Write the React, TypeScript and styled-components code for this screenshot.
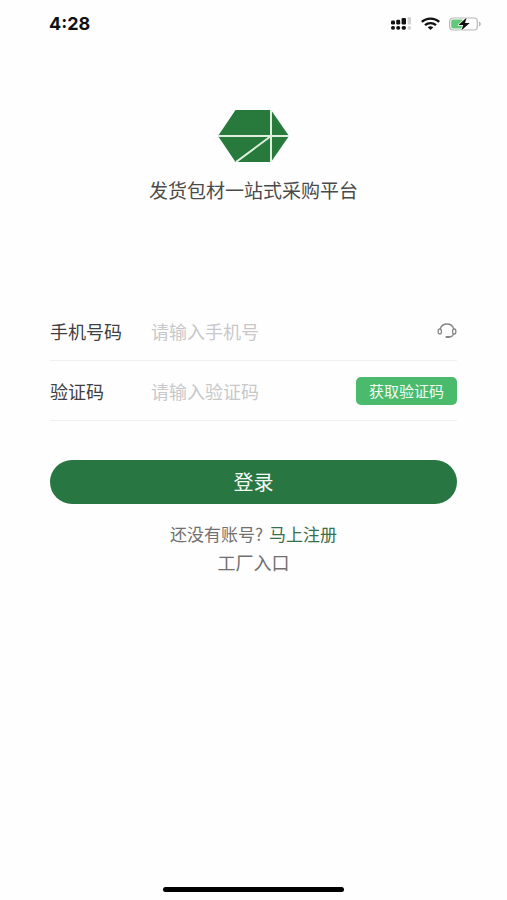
import React from 'react';
import styled, { createGlobalStyle } from 'styled-components';

const GlobalStyle = createGlobalStyle`
  *, *::before, *::after { box-sizing: border-box; }
  body {
    margin: 0;
    background: #fefefe;
    font-family: "Noto Sans CJK SC", sans-serif;
    color: #444;
  }
  button, input { font-family: inherit; }
`;

const Screen = styled.div`
  min-height: 100vh;
  display: flex;
  flex-direction: column;
`;

const StatusBar = styled.header`
  display: flex;
  align-items: center;
  justify-content: space-between;
  height: 47px;
  padding: 0 25px 0 49px;
`;

const Clock = styled.time`
  font-family: Inter, sans-serif;
  font-size: 18px;
  line-height: 24px;
  font-weight: 700;
  color: #111;
`;

const StatusIcons = styled.div`
  display: flex;
  align-items: center;
  gap: 9px;
  svg { display: block; }
`;

const Brand = styled.section`
  display: flex;
  flex-direction: column;
  align-items: center;
  gap: 14px;
  padding-top: 63px;
`;

const Slogan = styled.h1`
  margin: 0;
  font-size: 19px;
  line-height: 28px;
  font-weight: 400;
  color: #4a4a4a;
`;

const Form = styled.form`
  display: flex;
  flex-direction: column;
  margin: 97px 50px 0;
`;

const Field = styled.div`
  display: flex;
  align-items: center;
  height: 60px;
  border-bottom: 1px solid #f0f0f1;
`;

const Label = styled.label`
  flex: 0 0 101px;
  font-size: 18px;
  line-height: 28px;
  color: #404040;
`;

const TextInput = styled.input`
  flex: 1;
  min-width: 0;
  height: 40px;
  padding: 0;
  border: 0;
  outline: 0;
  background: transparent;
  font-size: 18px;
  color: #404040;
  &::placeholder { color: #c8c8ca; opacity: 1; }
`;

const IconButton = styled.button`
  display: flex;
  padding: 0;
  border: 0;
  background: none;
  color: #858585;
  cursor: pointer;
`;

const CodeButton = styled.button`
  height: 28px;
  padding: 0 13px;
  border: 0;
  border-radius: 5px;
  background: #4aba6d;
  color: #eefbf1;
  font-size: 15px;
  line-height: 28px;
  cursor: pointer;
`;

const LoginButton = styled.button`
  height: 44px;
  margin-top: 39px;
  padding: 0;
  border: 0;
  border-radius: 22px;
  background: #287641;
  color: #f4faf5;
  font-size: 20px;
  line-height: 44px;
  cursor: pointer;
`;

const Links = styled.nav`
  display: flex;
  flex-direction: column;
  align-items: center;
  margin-top: 16px;
`;

const Prompt = styled.p`
  display: flex;
  gap: 6px;
  margin: 0;
  font-size: 17px;
  line-height: 28px;
  color: #707070;
`;

const RegisterLink = styled.a`
  color: #35704b;
  text-decoration: none;
`;

const FactoryLink = styled.a`
  font-size: 18px;
  line-height: 28px;
  color: #707070;
  text-decoration: none;
`;

const HomeIndicator = styled.div`
  width: 181px;
  height: 5px;
  margin: auto auto 8px;
  border-radius: 3px;
  background: #000;
`;

const SignalIcon = () => (
  <svg width="21" height="14" viewBox="0 0 21 14" aria-hidden="true">
    <g fill="#111">
      <rect x="0" y="3.5" width="4" height="4" rx="1.3" />
      <rect x="5.2" y="2.7" width="4" height="4.8" rx="1.3" />
      <rect x="10.6" y="1" width="4.4" height="6.5" rx="1.2" />
      <rect x="0" y="9" width="4" height="3.8" rx="1.7" />
      <rect x="5.2" y="9" width="4" height="3.8" rx="1.7" />
      <rect x="10.6" y="9" width="4.4" height="3.8" rx="1.7" />
    </g>
    <g fill="#d2d2d2">
      <rect x="16.6" y="0" width="3.4" height="7.5" rx="1.2" />
      <rect x="16.6" y="9" width="3.4" height="3.8" rx="1.6" />
    </g>
  </svg>
);

const WifiIcon = () => (
  <svg width="19" height="14" viewBox="0 0 19 14" fill="none" stroke="#111" strokeWidth="2.3" aria-hidden="true">
    <path d="M.8 4.9C5.6.4 13.4.4 18.2 4.9" />
    <path d="M4 8.2c3.200-2.900 7.800-2.900 11 0" />
    <path d="M6.700 10.200c1.700-1.300 3.900-1.300 5.600 0L9.500 13z" fill="#111" stroke="none" />
  </svg>
);

const BatteryIcon = () => (
  <svg width="33" height="16" viewBox="0 0 33 16" aria-hidden="true">
    <rect x=".7" y="2" width="27.6" height="12" rx="3.2" fill="#fefefe" stroke="#b5b8b5" strokeWidth="1.2" />
    <path d="M4 3.5h9.500v9H4a1.800 1.800 0 0 1-1.800-1.800V5.300A1.800 1.800 0 0 1 4 3.500z" fill="#63c87a" />
    <path d="M30 5.500c2.400.8 2.400 4.200 0 5z" fill="#b5b8b5" />
    <path d="M17.700 1.500 9.500 9h4.700l-1.900 5.500L20.700 7H16z" fill="#111" stroke="#fefefe" strokeWidth="1.400" paintOrder="stroke" strokeLinejoin="round" />
  </svg>
);

const Logo = () => (
  <svg width="71" height="52" viewBox="0 0 71 52" role="img" aria-label="发货包材">
    <path d="M0 26 17.500 0H53L71 26 53 52H17.500z" fill="#287a3c" />
    <g fill="none" stroke="#dff0df" strokeWidth="2">
      <path d="M0 26H71M53 0V52M18 52 53 26" />
    </g>
  </svg>
);

const HeadsetIcon = () => (
  <svg width="20" height="16" viewBox="0 0 20 16" fill="none" stroke="currentColor" strokeWidth="1.3" strokeLinecap="round" aria-hidden="true">
    <path d="M3.200 6C4.200 2.700 6.700 1 10 1s5.800 1.700 6.800 5" />
    <rect x="1.2" y="6" width="3.2" height="5" rx="1.6" />
    <rect x="15.6" y="6" width="3.2" height="5" rx="1.6" />
    <path d="M16.800 11c-.8 1.700-2.200 2.700-4.300 3" />
    <path d="M9.500 14h2.500" strokeWidth="2.2" />
  </svg>
);

export default function App() {
  return (
    <Screen>
      <GlobalStyle />
      <StatusBar>
        <Clock>4:28</Clock>
        <StatusIcons>
          <SignalIcon />
          <WifiIcon />
          <BatteryIcon />
        </StatusIcons>
      </StatusBar>
      <main>
        <Brand>
          <Logo />
          <Slogan>发货包材一站式采购平台</Slogan>
        </Brand>
        <Form onSubmit={(event: React.FormEvent) => event.preventDefault()}>
          <Field>
            <Label htmlFor="phone">手机号码</Label>
            <TextInput id="phone" type="tel" placeholder="请输入手机号" />
            <IconButton type="button" aria-label="联系客服">
              <HeadsetIcon />
            </IconButton>
          </Field>
          <Field>
            <Label htmlFor="code">验证码</Label>
            <TextInput id="code" inputMode="numeric" placeholder="请输入验证码" />
            <CodeButton type="button">获取验证码</CodeButton>
          </Field>
          <LoginButton type="submit">登录</LoginButton>
        </Form>
        <Links>
          <Prompt>
            <span>还没有账号?</span>
            <RegisterLink href="#register">马上注册</RegisterLink>
          </Prompt>
          <FactoryLink href="#factory">工厂入口</FactoryLink>
        </Links>
      </main>
      <HomeIndicator />
    </Screen>
  );
}
